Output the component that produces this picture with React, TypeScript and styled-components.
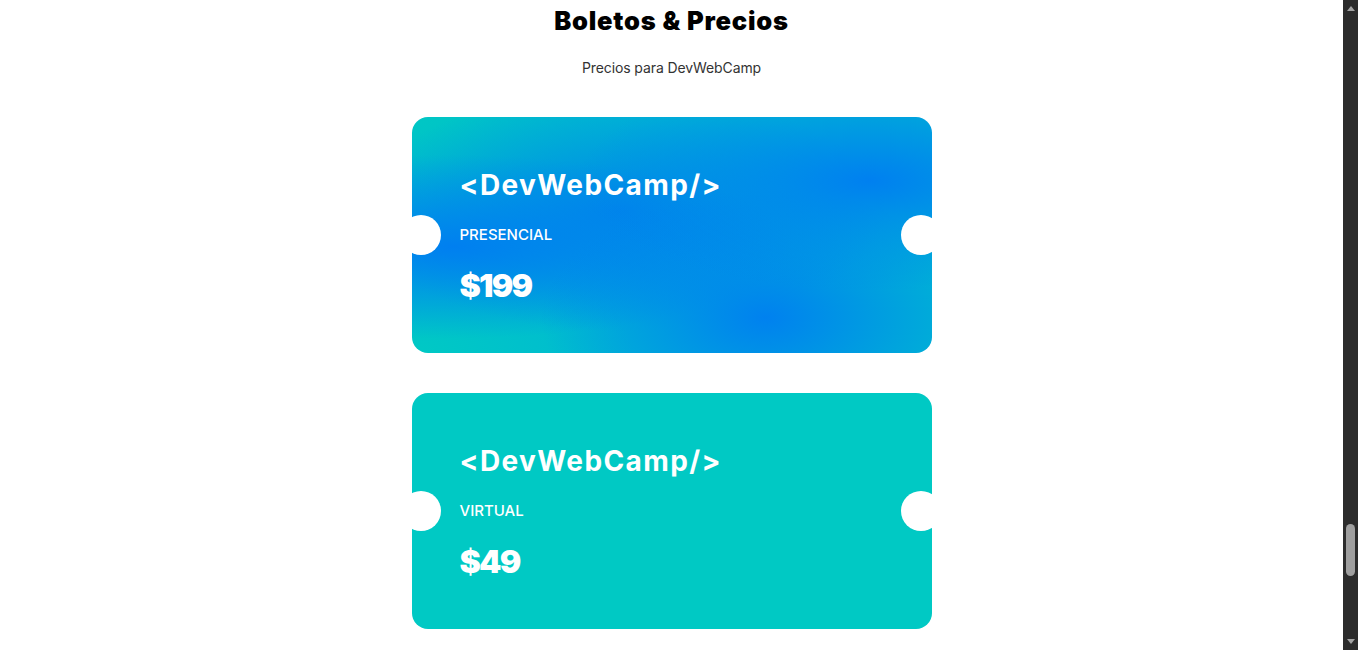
import React from "react";
import styled, { createGlobalStyle } from "styled-components";

const GlobalStyle = createGlobalStyle`
  html, body {
    margin: 0;
    background: #ffffff;
    overflow: hidden;
  }
  body {
    color: #1a1a1a;
    font-family: "Inter", "Noto Sans", sans-serif;
  }
  * { box-sizing: border-box; }
`;

const Frame = styled.div`
  display: flex;
  height: 100vh;
`;

const Main = styled.main`
  flex: 1;
  min-width: 0;
`;

const Section = styled.section`
  display: flex;
  flex-direction: column;
  align-items: center;
  padding-top: 5px;
`;

const Heading = styled.h2`
  margin: 0;
  font-family: "Inter", sans-serif;
  font-weight: 900;
  font-size: 25.5px;
  line-height: 32px;
  color: #000000;
  letter-spacing: 0.8px;
`;

const Subtitle = styled.p`
  margin: 22px 0 0;
  font-size: 14px;
  line-height: 18px;
  color: #333333;
  font-weight: 400;
  letter-spacing: -0.1px;
`;

const Tickets = styled.div`
  display: flex;
  flex-direction: column;
  gap: 40px;
  margin-top: 40px;
`;

const Ticket = styled.div<{ $variant: "presencial" | "virtual" }>`
  position: relative;
  width: 520px;
  height: 236px;
  border-radius: 16px;
  padding: 51px 48px 0;
  display: flex;
  flex-direction: column;
  color: #ffffff;
  background-color: ${(p) => (p.$variant === "presencial" ? "#00b9d2" : "#00c9c4")};
  background-image: ${(p) =>
    p.$variant === "presencial"
      ? `radial-gradient(at 88% 27%, #0080f0 0px, transparent 45%),
         radial-gradient(at 68% 85%, #0081ef 0px, transparent 45%),
         radial-gradient(at 8% 55%, #007ff0 0px, transparent 50%),
         radial-gradient(at 40% 40%, #0088e8 0px, transparent 60%),
         radial-gradient(at 0% 0%, #00c7c4 0px, transparent 30%),
         radial-gradient(at 0% 100%, #00c9c4 0px, transparent 30%)`
      : "none"};

  &::before,
  &::after {
    content: "";
    position: absolute;
    top: 50%;
    width: 40px;
    height: 40px;
    margin-top: -20px;
    border-radius: 50%;
    background: #ffffff;
  }
  &::before { left: -11px; }
  &::after { right: -9px; }
`;

const Logo = styled.h3`
  margin: 0;
  font-family: "Inter", sans-serif;
  font-weight: 700;
  font-size: 28px;
  line-height: 34px;
  letter-spacing: 1.4px;
`;

const Plan = styled.p`
  margin: 23px 0 0;
  font-size: 15px;
  line-height: 20px;
  font-weight: 500;
  text-transform: uppercase;
`;

const Price = styled.p`
  margin: 22px 0 0;
  font-family: "Inter", sans-serif;
  font-weight: 900;
  font-size: 32px;
  line-height: 38px;
  letter-spacing: -1.8px;
`;

const ScrollBar = styled.aside`
  width: 15px;
  height: 100vh;
  background: #2c2c2c;
  display: flex;
  flex-direction: column;
  align-items: center;
`;

const ScrollButton = styled.div`
  width: 15px;
  height: 17px;
  display: flex;
  align-items: center;
  justify-content: center;
  color: #a3a3a3;
`;

const ScrollTrack = styled.div`
  flex: 1;
  width: 15px;
  display: flex;
  flex-direction: column;
  align-items: center;
`;

const Thumb = styled.div`
  width: 9px;
  height: 52px;
  margin-top: 507px;
  border-radius: 5px;
  background: #9f9f9f;
`;

const Arrow = ({ down }: { down?: boolean }) => (
  <svg width="8" height="5" viewBox="0 0 8 5" fill="currentColor">
    {down ? <path d="M0 0h8L4 5z" /> : <path d="M4 0l4 5H0z" />}
  </svg>
);

const tickets = [
  { variant: "presencial" as const, plan: "Presencial", price: "$199" },
  { variant: "virtual" as const, plan: "Virtual", price: "$49" },
];

export default function App() {
  return (
    <>
      <GlobalStyle />
      <Frame>
        <Main>
          <Section>
            <Heading>Boletos &amp; Precios</Heading>
            <Subtitle>Precios para DevWebCamp</Subtitle>
            <Tickets>
              {tickets.map((t) => (
                <Ticket key={t.variant} $variant={t.variant}>
                  <Logo>&lt;DevWebCamp/&gt;</Logo>
                  <Plan>{t.plan}</Plan>
                  <Price>{t.price}</Price>
                </Ticket>
              ))}
            </Tickets>
          </Section>
        </Main>
        <ScrollBar>
          <ScrollButton>
            <Arrow />
          </ScrollButton>
          <ScrollTrack>
            <Thumb />
          </ScrollTrack>
          <ScrollButton>
            <Arrow down />
          </ScrollButton>
        </ScrollBar>
      </Frame>
    </>
  );
}
